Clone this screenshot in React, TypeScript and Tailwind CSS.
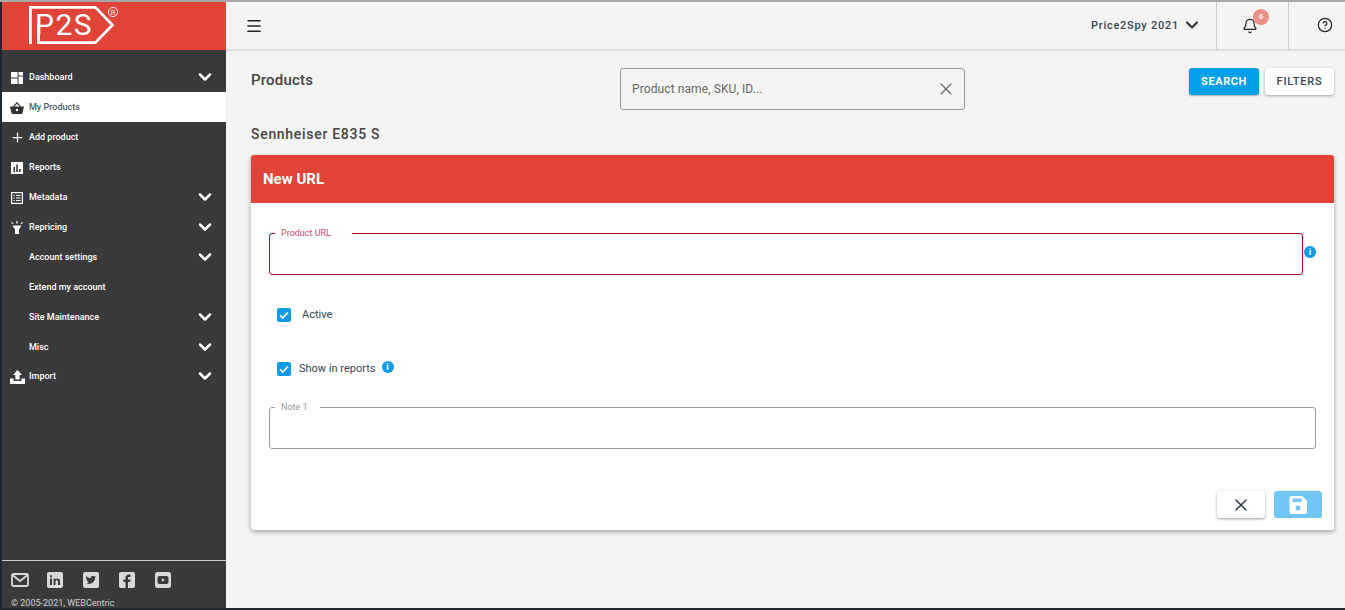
import { Bell, ChevronDown, HelpCircle, Menu, Plus, X } from 'lucide-react';
import type { ReactNode } from 'react';

function DashIcon() {
  return (
    <svg viewBox="0 0 12 12" className="w-3 h-3" fill="#fff">
      <rect x="0" y="0" width="6.5" height="5.5" />
      <rect x="7.5" y="0" width="4.5" height="3.5" />
      <rect x="7.5" y="4.5" width="4.5" height="7.5" />
      <rect x="0" y="6.5" width="6.5" height="5.5" />
    </svg>
  );
}

function BasketIcon() {
  return (
    <svg viewBox="0 0 14 12" className="w-[14px] h-3">
      <path d="M0 4.6h14l-1.6 6.6a1 1 0 0 1-1 .8H2.6a1 1 0 0 1-1-.8z" fill="#333" />
      <path d="M3.6 4.6 7 .8l3.4 3.8" fill="none" stroke="#333" strokeWidth="1.2" />
      <circle cx="7" cy="8" r="1.2" fill="#fff" />
    </svg>
  );
}

function ReportsIcon() {
  return (
    <svg viewBox="0 0 12 12" className="w-3 h-3">
      <rect width="12" height="12" fill="#fff" />
      <rect x="2.4" y="5" width="1.6" height="5" fill="#3a3a3a" />
      <rect x="5.2" y="2.5" width="1.6" height="7.5" fill="#3a3a3a" />
      <rect x="8" y="7" width="1.6" height="3" fill="#3a3a3a" />
    </svg>
  );
}

function MetaIcon() {
  return (
    <svg viewBox="0 0 12 12" className="w-3 h-3" fill="none" stroke="#fff">
      <rect x="0.6" y="0.6" width="10.8" height="10.8" strokeWidth="1.2" />
      <path d="M2.5 3.5h1.2M5 3.5h4.5M2.5 6h1.2M5 6h4.5M2.5 8.5h1.2M5 8.5h4.5" strokeWidth="1.1" />
    </svg>
  );
}

function RepriceIcon() {
  return (
    <svg viewBox="0 0 12 13" className="w-3 h-[13px]" fill="#fff">
      <path d="M1.5 4.5h9L8 8.5V13H4V8.5z" />
      <rect x="5.4" y="0" width="1.2" height="2.6" />
      <path d="M.8.9 2.5 2.6l-.8.7L0 1.6zM11.2.9 9.5 2.6l.8.7L12 1.6z" />
    </svg>
  );
}

function ImportIcon() {
  return (
    <svg viewBox="0 0 15 14" className="w-[15px] h-[14px]" fill="#fff">
      <path d="M7.5 0 12 5H9.6v4.5H5.4V5H3z" />
      <path d="M0 8.5h3.6v2.5h7.8V8.5H15V14H0z" />
    </svg>
  );
}

function InfoDot({ className }: { className: string }) {
  return (
    <span className={`flex items-center justify-center rounded-full bg-[#0f9ae8] text-white text-[9px] font-bold leading-none w-3 h-3 ${className}`}>
      i
    </span>
  );
}

function Check() {
  return (
    <span className="flex items-center justify-center w-[14px] h-[14px] rounded-[2px] bg-[#0f9ae8]">
      <svg viewBox="0 0 14 14" className="w-[14px] h-[14px]" fill="none" stroke="#fff" strokeWidth="1.6">
        <path d="M3 7.2 5.8 10 11 4.4" />
      </svg>
    </span>
  );
}

type NavItem = { label: string; icon?: ReactNode; arrow?: boolean; active?: boolean };

const navItems: NavItem[] = [
  { label: 'Dashboard', icon: <DashIcon />, arrow: true },
  { label: 'My Products', icon: <BasketIcon />, active: true },
  { label: 'Add product', icon: <Plus size={15} color="#fff" strokeWidth={2} /> },
  { label: 'Reports', icon: <ReportsIcon /> },
  { label: 'Metadata', icon: <MetaIcon />, arrow: true },
  { label: 'Repricing', icon: <RepriceIcon />, arrow: true },
  { label: 'Account settings', arrow: true },
  { label: 'Extend my account' },
  { label: 'Site Maintenance', arrow: true },
  { label: 'Misc', arrow: true },
  { label: 'Import', icon: <ImportIcon />, arrow: true },
];

function Logo() {
  return (
    <div className="relative w-[92px] h-[38px]">
      <svg viewBox="0 0 92 38" className="absolute left-0 top-0 w-[92px] h-[38px]" fill="none" stroke="#fff" strokeWidth="2.8">
        <path d="M1.400 38V1.400h65l17 17.600-17 17.600H9.500V18" />
        <circle cx="84" cy="6" r="4.600" strokeWidth="0.9" />
        <text x="84" y="8.600" textAnchor="middle" fontSize="7.500" fill="#fff" stroke="none">R</text>
      </svg>
      <span className="absolute left-[6px] top-[6px] text-white text-[30px] leading-[26px] font-normal tracking-[1.5px]">P2S</span>
    </div>
  );
}

function SocialIcons() {
  const fill = '#d9d9d9';
  return (
    <div className="flex items-center h-[18px] pl-[9px]">
      <svg viewBox="0 0 18 14" className="w-[18px] h-[14px] mr-[18px]" fill="none" stroke={fill} strokeWidth="1.8">
        <rect x="1" y="1" width="16" height="12" rx="1.5" />
        <path d="M1.5 2 9 8l7.5-6" />
      </svg>
      <svg viewBox="0 0 16 16" className="w-4 h-4 mr-[20px]">
        <rect width="16" height="16" rx="2" fill={fill} />
        <path d="M3 6.5h2V13H3zM3 3.2h2v2H3zM6.6 6.5h1.900v1c.4-.7 1.100-1.100 2-1.100 1.800 0 2.500 1.100 2.500 3V13h-2V9.800c0-.9-.3-1.600-1.200-1.600s-1.300.7-1.300 1.600V13h-1.900z" fill="#3a3a3a" />
      </svg>
      <svg viewBox="0 0 16 16" className="w-4 h-4 mr-[20px]">
        <rect width="16" height="16" rx="2" fill={fill} />
        <path d="M13 4.800c-.4.2-.8.3-1.200.3.4-.3.8-.7.9-1.200-.4.2-.9.4-1.300.5a2.100 2.100 0 0 0-3.600 1.900C6 6.200 4.500 5.400 3.400 4.100c-.6 1-.3 2.200.6 2.800-.3 0-.6-.1-.9-.3 0 1 .7 1.900 1.700 2.100-.3.100-.6.100-.9 0 .3.900 1.100 1.400 2 1.500-.9.700-2 1-3.100.9 3 1.800 8.900 1 9.300-5.500.4-.2.700-.5.900-.8z" fill="#3a3a3a" />
      </svg>
      <svg viewBox="0 0 16 16" className="w-4 h-4 mr-[20px]">
        <rect width="16" height="16" rx="2" fill={fill} />
        <path d="M9 16V10h2.200l.4-2.400H9V6.200c0-.8.3-1.200 1.200-1.200h1.400V2.800C11.200 2.700 10.500 2.600 9.800 2.600 7.800 2.600 6.500 3.800 6.500 6v1.600H4.400V10h2.100v6z" fill="#3a3a3a" />
      </svg>
      <svg viewBox="0 0 16 16" className="w-4 h-4">
        <rect width="16" height="16" rx="2.500" fill={fill} />
        <rect x="2.500" y="4" width="11" height="8" rx="2" fill="#3a3a3a" />
        <path d="M6.800 6.200 10 8l-3.200 1.800z" fill={fill} />
      </svg>
    </div>
  );
}

function Sidebar() {
  return (
    <aside className="w-[224px] shrink-0 bg-[#3a3a3a] flex flex-col">
      <div className="h-[48px] bg-[#e04338] flex items-start pl-[27px] pt-[4px] overflow-hidden">
        <Logo />
      </div>
      <nav className="pt-[12px] flex-1">
        {navItems.map((item) => (
          <div
            key={item.label}
            className={`flex items-center pt-[1px] pr-[11px] text-[9px] font-medium ${item.label === 'Import' ? 'h-[28px]' : 'h-[30px]'} ${item.active ? 'bg-white text-[#455a64]' : 'text-white'}`}
          >
            <span className="w-[27px] flex justify-center pl-[3px] shrink-0">{item.icon}</span>
            <span className="flex-1">{item.label}</span>
            {item.arrow && <ChevronDown size={20} color="#fff" strokeWidth={3} className="-mt-[1px]" />}
          </div>
        ))}
      </nav>
      <div className="border-t border-[#c9c9c9] h-[48px] pt-[10px]">
        <SocialIcons />
        <p className="mt-[8px] pl-[9px] text-[9px] leading-[12px] text-[#cfcfcf]">© 2005-2021, WEBCentric</p>
      </div>
    </aside>
  );
}

function Header() {
  return (
    <header className="h-[49px] shrink-0 bg-[#f4f4f4] border-b-2 border-[#dcdcdc] flex items-stretch">
      <div className="flex-1 flex items-center pl-[19px]">
        <Menu size={18} color="#222" strokeWidth={2.1} />
      </div>
      <div className="flex items-center pr-[14px] text-[#37474f] text-[11px] font-medium tracking-[0.75px]">
        <span className="pt-[2px]">Price2Spy 2021</span>
        <ChevronDown size={20} color="#333" strokeWidth={2.6} className="ml-[3px] -mt-[2px]" />
      </div>
      <div className="relative w-[72px] border-l border-[#cccccc] flex items-center justify-center pr-[6px]">
        <Bell size={16} color="#222" strokeWidth={1.8} />
        <span className="absolute left-[36px] top-[7px] w-4 h-4 rounded-full bg-[#ea8f88] text-white text-[7px] font-bold flex items-center justify-center">6</span>
      </div>
      <div className="w-[57px] border-l border-[#cccccc] flex items-center justify-center pl-[16px]">
        <HelpCircle size={16} color="#222" strokeWidth={1.8} className="-mt-[2px]" />
      </div>
    </header>
  );
}

function Outlined({ label, labelClass, borderClass }: { label: string; labelClass: string; borderClass: string }) {
  return (
    <div className={`relative h-[42px] border rounded-[3px] bg-white ${borderClass}`}>
      <span className={`absolute left-[5px] -top-[6px] bg-white pl-[6px] text-[9px] leading-[11px] ${labelClass}`}>{label}</span>
    </div>
  );
}

function Card() {
  return (
    <section className="ml-[25px] mr-[11px] mt-[12px] h-[375px] bg-white rounded-[3px] shadow-[0_2px_5px_rgba(0,0,0,0.35)] flex flex-col">
      <div className="h-[48px] shrink-0 bg-[#e04338] rounded-t-[3px] flex items-center pl-[12px] text-white text-[15px] font-bold">New URL</div>
      <div className="flex-1 pt-[30px] pl-[18px] pr-[18px]">
        <div className="flex items-center">
          <div className="w-[1034px]">
            <Outlined label="Product URL" labelClass="text-[#d0486a] pr-[21px]" borderClass="border-[#b00028]" />
          </div>
          <InfoDot className="ml-[1px] -mt-[4px]" />
        </div>
        <div className="h-[14px] mt-[33px] flex items-center pl-[8px] text-[11px] text-[#37474f]">
          <Check />
          <span className="ml-[11px]">Active</span>
        </div>
        <div className="h-[14px] mt-[40px] flex items-center pl-[8px] text-[11px] text-[#37474f]">
          <Check />
          <span className="ml-[8px]">Show in reports</span>
          <InfoDot className="ml-[6px] -mt-[4px]" />
        </div>
        <div className="mt-[31px]">
          <Outlined label="Note 1" labelClass="text-[#999999] pr-[12px]" borderClass="border-[#9a9a9a]" />
        </div>
        <div className="mt-[42px] -mr-[6px] flex justify-end gap-[9px]">
          <button className="w-[48px] h-[27px] bg-white rounded-[3px] shadow-[0_1px_3px_rgba(0,0,0,0.4)] flex items-center justify-center">
            <X size={20} color="#27364a" strokeWidth={1.8} />
          </button>
          <button className="w-[48px] h-[27px] bg-[#72c6f4] rounded-[3px] flex items-center justify-center">
            <svg viewBox="0 0 18 18" className="w-[18px] h-[18px]">
              <path d="M2.500 0H13l5 4.500V16a2 2 0 0 1-2 2H2.500A2 2 0 0 1 .500 16V2a2 2 0 0 1 2-2z" fill="#fff" />
              <rect x="3.500" y="2.500" width="9" height="3.500" fill="#72c6f4" />
              <circle cx="9" cy="12" r="2.500" fill="#72c6f4" />
            </svg>
          </button>
        </div>
      </div>
    </section>
  );
}

export default function App() {
  return (
    <div className="h-[610px] w-[1345px] overflow-hidden flex flex-col bg-[#f4f4f4] font-['Roboto',sans-serif]">
      <div className="h-[2px] shrink-0 bg-[#a8a8a8]" />
      <div className="flex-1 flex min-h-0">
        <div className="w-[2px] shrink-0 bg-[#1f2730]" />
        <Sidebar />
        <main className="flex-1 flex flex-col min-w-0">
          <Header />
          <div className="flex-1">
            <div className="h-[59px] flex items-start pl-[25px] pr-[11px]">
              <h1 className="w-[369px] mt-[20px] text-[15px] leading-[18px] font-medium text-[#444] tracking-[0.2px]">Products</h1>
              <div className="w-[345px] h-[42px] mt-[17px] border border-[#9a9a9a] rounded-[3px] flex items-center pl-[11px] pr-[8px] text-[12px] text-[#666] tracking-[0.1px]">
                <span className="flex-1">Product name, SKU, ID...</span>
                <X size={20} color="#666" strokeWidth={1.4} />
              </div>
              <div className="flex-1 mt-[17px] flex justify-end gap-[6px]">
                <button className="w-[70px] h-[27px] pt-[1px] bg-[#00a0e9] rounded-[3px] shadow-[0_1px_2px_rgba(0,0,0,0.3)] text-white text-[11px] font-bold tracking-[0.6px]">SEARCH</button>
                <button className="w-[69px] h-[27px] pt-[1px] bg-white rounded-[3px] shadow-[0_1px_3px_rgba(0,0,0,0.35)] text-[#37474f] text-[11px] font-medium tracking-[0.8px]">FILTERS</button>
              </div>
            </div>
            <h2 className="pl-[25px] mt-[15px] text-[14px] leading-[18px] font-medium text-[#444] tracking-[0.7px]">Sennheiser E835 S</h2>
            <Card />
          </div>
        </main>
      </div>
      <div className="h-[2px] shrink-0 bg-[#1f2730]" />
    </div>
  );
}
